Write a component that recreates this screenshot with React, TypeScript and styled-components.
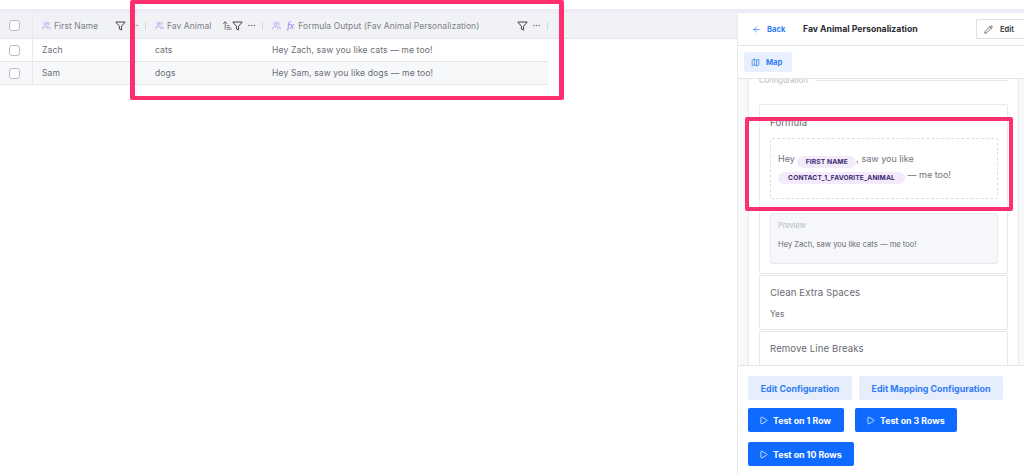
import React from 'react';
import styled, { createGlobalStyle } from 'styled-components';
import { ArrowLeft, Pencil, Map as MapIcon, Play, Users, MoreHorizontal, ArrowUpNarrowWide } from 'lucide-react';

const Global = createGlobalStyle`
  html, body { margin: 0; padding: 0; height: 100%; background: #fff; overflow: hidden; }
  * { box-sizing: border-box; }
  #root { height: 475px; width: 1024px; position: relative; font-family: Inter, "Open Sans", sans-serif; color: #5d6068; }
`;

const Page = styled.div`
  width: 1024px; height: 475px; display: flex; flex-direction: column; position: relative; overflow: hidden;
`;
const TopGap = styled.div`height: 9px; flex: none; background: #fff;`;
const Strip = styled.div`height: 4px; flex: none; background: #eeeaf6;`;
const Body = styled.div`flex: 1; display: flex; min-height: 0;`;
const Main = styled.main`flex: 1; min-width: 0; display: flex; flex-direction: column;`;
const HeaderRow = styled.div`
  height: 26px; display: grid; grid-template-columns: 33px 113px 117px 285px 1fr; align-items: stretch;
  background: #f1f2f5; border-bottom: 1px solid #e3e5ea;
`;
const Row = styled.div<{ $alt?: boolean }>`
  width: 548px; height: 23px; display: grid; grid-template-columns: 33px 113px 117px 285px; align-items: center;
  background: ${p => (p.$alt ? '#f7f8fa' : '#fff')}; border-bottom: 1px solid #e3e5ea;
  font-size: 8.6px; color: #6a6d75; letter-spacing: .1px;
`;
const CheckCell = styled.div`
  height: 100%; display: flex; align-items: center; justify-content: center; border-right: 1px solid #e8eaee; padding-right: 4px;
`;
const Check = styled.span`width: 11px; height: 11px; border: 1px solid #b9bcc4; border-radius: 3px; background: #fff;`;
const HeadCell = styled.div`
  display: flex; align-items: center; padding-left: 9px; font-size: 8.5px; color: #7c7f88; white-space: nowrap; letter-spacing: .06px;
`;
const Cell = styled.div`
  padding-left: 9px; white-space: nowrap;
`;
const Purple = styled.span`display: inline-flex; color: #9d78ee; margin-right: 3px;`;
const Fx = styled.i`
  font-family: "Liberation Serif", serif; font-size: 10px; color: #9d78ee; margin: 0 4px 0 3px;
`;
const Spacer = styled.span`flex: 1;`;
const Tools = styled.span`display: inline-flex; align-items: center; color: #444; gap: 4px;`;
const Sep = styled.span`width: 1px; height: 8px; background: #d4d6dc; margin-left: 2px;`;
const SortIcon = styled(ArrowUpNarrowWide)`margin-right: -5px;`;

const Side = styled.aside`
  width: 287px; flex: none; display: flex; flex-direction: column; background: #fff; border-left: 1px solid #e8eaee;
`;
const SideHead = styled.header`
  height: 33px; flex: none; display: flex; align-items: center; padding: 0 0 0 14px; border-bottom: 1px solid #e3e5ea;
`;
const BackLink = styled.span`
  display: inline-flex; align-items: center; gap: 6px; color: #2f7cf6; font-size: 7.6px; font-weight: 700; width: 51px;
`;
const Title = styled.h1`
  flex: 1; margin: 0; font-size: 8.7px; font-weight: 700; color: #2a2c33; white-space: nowrap;
`;
const EditBtn = styled.button`
  width: 48px; height: 20px; padding: 0 0 0 7px; display: flex; align-items: center; gap: 7px; border: 1px solid #dfe1e6;
  border-radius: 2px 0 0 2px; border-right: none; background: #fff; color: #44464d; font: 700 7.4px Inter, sans-serif;
`;
const MapBar = styled.div`
  height: 33px; flex: none; display: flex; align-items: center; padding: 0 0 0 6px; border-bottom: 1px solid #e3e5ea; background: #fff; position: relative; z-index: 1;
`;
const MapTab = styled.span`
  width: 48px; height: 20px; display: flex; align-items: center; gap: 6px; padding-left: 7px; background: #e9f0fd; border-radius: 2px;
  color: #2f7cf6; font-size: 7.6px; font-weight: 700;
`;
const Scroll = styled.div`
  flex: 1; min-height: 0; overflow: hidden; background: #f7f8fa; padding: 0 5px 0 10px;
`;
const OuterCard = styled.div`
  margin-top: -7px; background: #fff; border: 1px solid #e8eaee; padding: 0 10px; height: 320px;
`;
const Legend = styled.div`
  display: flex; align-items: center; gap: 7px; height: 14px; font-size: 7.6px; color: #b5b8bf;
  &::after { content: ''; flex: 1; height: 1px; background: #e3e5ea; }
`;
const Gap = styled.div`height: 17px;`;
const InnerCard = styled.section<{ $h: number; $top: number }>`
  height: ${p => p.$h}px; background: #fff; border: 1px solid #e8eaee; border-radius: 2px; padding: ${p => p.$top}px 9px 0 10px; margin-bottom: 1px; overflow: hidden;
`;
const CardTitle = styled.h2`
  margin: 0; font-size: 9.6px; font-weight: 400; color: #686b73; line-height: 12px; letter-spacing: .1px;
`;
const Dashed = styled.div`
  margin-top: 9px; height: 61px; border: 1px dashed #dcdee3; border-radius: 2px; padding: 13px 7px 0 7px; font-size: 9px; line-height: 14.5px; color: #6f727a;
`;
const Pill = styled.span<{ $w: number }>`
  display: inline-block; width: ${p => p.$w}px; height: 12px; line-height: 13px; border-radius: 6px; background: #f3ebfb; color: #3c2a72; text-align: center;
  font-size: 6.7px; font-weight: 700; letter-spacing: .1px; vertical-align: -2px; white-space: nowrap;
`;
const Preview = styled.div`
  margin-top: 14px; height: 51px; background: #f6f7fa; border: 1px solid #e8eaee; border-radius: 2px; padding: 7px 7px;
`;
const PreviewLabel = styled.div`font-size: 7.4px; color: #b5b8bf; line-height: 10px;`;
const PreviewText = styled.div`margin-top: 9px; font-size: 7.6px; color: #686b73; line-height: 10px;`;
const Value = styled.div`margin-top: 10px; font-size: 8.4px; color: #6f727a; line-height: 11px;`;
const Footer = styled.footer`
  height: 110px; flex: none; background: #fff; border-top: 1px solid #e3e5ea; padding: 10px 10px 0 10px;
  display: flex; flex-direction: column; align-items: flex-start;
`;
const FootRow = styled.div<{ $gap: number; $below: number }>`
  display: flex; column-gap: ${p => p.$gap}px; margin-bottom: ${p => p.$below}px;
`;
const SoftBtn = styled.button<{ $w: number }>`
  width: ${p => p.$w}px; height: 24px; border: none; border-radius: 2px; background: #e6eefc; color: #2f7cf6;
  font: 700 8.9px Inter, sans-serif; padding: 0;
`;
const RunBtn = styled.button<{ $w: number }>`
  width: ${p => p.$w}px; height: 24px; border: none; border-radius: 2px; background: #0f6bff; color: #fff; display: flex; align-items: center; gap: 5px; padding: 0 0 0 11px;
  font: 700 8.8px Inter, sans-serif;
`;
const Highlight = styled.div<{ $x: number; $y: number; $w: number; $h: number; $side: number }>`
  position: absolute; left: ${p => p.$x}px; top: ${p => p.$y}px; width: ${p => p.$w}px; height: ${p => p.$h}px;
  border-style: solid; border-color: #ff2e6e; border-width: 4px ${p => p.$side}px; border-radius: 2px; pointer-events: none; z-index: 5;
`;

const People = () => <Purple><Users size={9} strokeWidth={1.5} /></Purple>;
const Filter = () => <svg width="11" height="10" viewBox="0 0 11 10" fill="none" stroke="#444" strokeWidth="1"><path d="M.8 1h9.4L6.6 5.2V9L4.4 8V5.2z" strokeLinejoin="round" /></svg>;
const Dots = () => <MoreHorizontal size={9} color="#777" />;

export default function App() {
  return (
    <Page>
      <Global />
      <TopGap />
      <Strip />
      <Body>
        <Main>
          <HeaderRow>
            <CheckCell><Check /></CheckCell>
            <HeadCell><People />First Name<Spacer /><Tools><Filter /><Dots /><Sep /></Tools></HeadCell>
            <HeadCell><People />Fav Animal<Spacer /><Tools><SortIcon size={11} strokeWidth={1.5} /><Filter /><Dots /><Sep /></Tools></HeadCell>
            <HeadCell><People /><Fx>fx</Fx>Formula Output (Fav Animal Personalization)<Spacer /><Tools><Filter /><Dots /><Sep /></Tools></HeadCell>
            <div />
          </HeaderRow>
          <Row>
            <CheckCell><Check /></CheckCell><Cell>Zach</Cell><Cell>cats</Cell><Cell>Hey Zach, saw you like cats — me too!</Cell>
          </Row>
          <Row $alt>
            <CheckCell><Check /></CheckCell><Cell>Sam</Cell><Cell>dogs</Cell><Cell>Hey Sam, saw you like dogs — me too!</Cell>
          </Row>
        </Main>
        <Side>
          <SideHead>
            <BackLink><ArrowLeft size={9} />Back</BackLink>
            <Title>Fav Animal Personalization</Title>
            <EditBtn><Pencil size={9} />Edit</EditBtn>
          </SideHead>
          <MapBar><MapTab><MapIcon size={9} />Map</MapTab></MapBar>
          <Scroll>
            <OuterCard>
              <Legend>Configuration</Legend>
              <Gap />
              <InnerCard $h={170} $top={12}>
                <CardTitle>Formula</CardTitle>
                <Dashed>
                  Hey <Pill $w={59}>FIRST NAME</Pill>, saw you like<br />
                  <Pill $w={127}>CONTACT_1_FAVORITE_ANIMAL</Pill> — me too!
                </Dashed>
                <Preview>
                  <PreviewLabel>Preview</PreviewLabel>
                  <PreviewText>Hey Zach, saw you like cats — me too!</PreviewText>
                </Preview>
              </InnerCard>
              <InnerCard $h={55} $top={11}>
                <CardTitle>Clean Extra Spaces</CardTitle>
                <Value>Yes</Value>
              </InnerCard>
              <InnerCard $h={56} $top={11}>
                <CardTitle>Remove Line Breaks</CardTitle>
              </InnerCard>
            </OuterCard>
          </Scroll>
          <Footer>
            <FootRow $gap={7} $below={8}>
              <SoftBtn $w={104}>Edit Configuration</SoftBtn>
              <SoftBtn $w={144}>Edit Mapping Configuration</SoftBtn>
            </FootRow>
            <FootRow $gap={11} $below={10}>
              <RunBtn $w={96}><Play size={9} />Test on 1 Row</RunBtn>
              <RunBtn $w={102}><Play size={9} />Test on 3 Rows</RunBtn>
            </FootRow>
            <FootRow $gap={0} $below={0}>
              <RunBtn $w={106}><Play size={9} />Test on 10 Rows</RunBtn>
            </FootRow>
          </Footer>
        </Side>
      </Body>
      <Highlight $x={130} $y={0} $w={434} $h={100} $side={5} />
      <Highlight $x={745} $y={117} $w={268} $h={94} $side={4} />
    </Page>
  );
}
